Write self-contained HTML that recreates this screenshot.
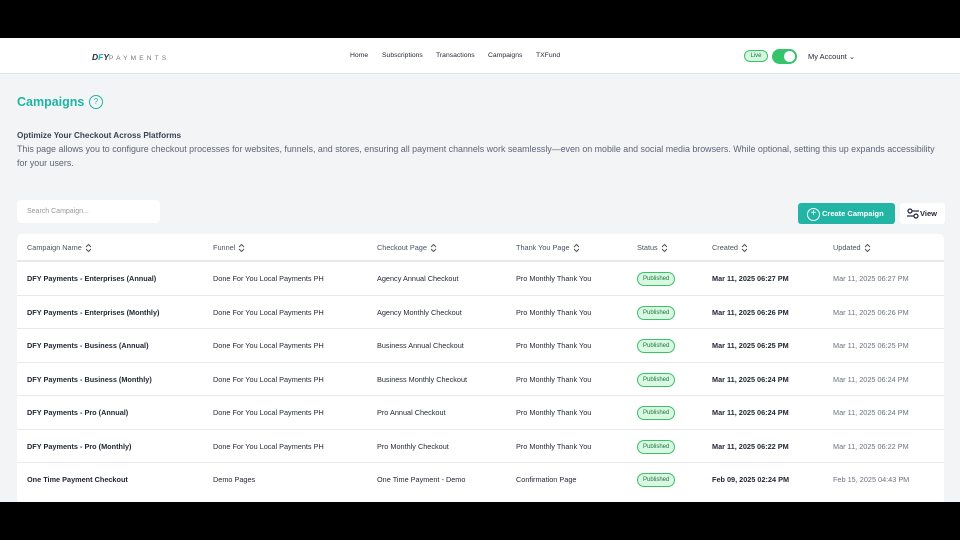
<!DOCTYPE html>
<html><head><style>
*{box-sizing:border-box;margin:0;padding:0}
body{width:960px;height:540px;background:#000;font-family:"Liberation Sans",sans-serif;position:relative;overflow:hidden}
.page{position:absolute;top:38px;left:0;width:960px;height:464px;background:#f3f4f6;overflow:hidden}
.hdr{height:36px;background:#fff;border-bottom:1px solid #e2e4e8;position:relative}
.logo{position:absolute;left:92px;top:14px;font-size:6.5px;letter-spacing:3.2px;color:#777}
.logo b{color:#1f2d3d;letter-spacing:0;font-size:8.5px;font-style:italic}
.logo b i{color:#1cb5a6}
.nav span{position:absolute;top:14px;font-size:6.8px;color:#1f2533}
.live{position:absolute;left:744px;top:12px;width:24px;height:12px;border:1px solid #3ac267;background:#d5f6df;border-radius:6px;font-size:6px;color:#1a7a3a;text-align:center;line-height:10px}
.tog{position:absolute;left:772px;top:11px;width:25px;height:15px;background:#35c46a;border-radius:8px}
.tog:after{content:"";position:absolute;right:2px;top:2px;width:11px;height:11px;background:#fff;border-radius:50%}
.acct{position:absolute;left:808px;top:14px;font-size:7.5px;color:#1f2533}
h1{position:absolute;left:17px;top:57px;font-size:12.5px;color:#1cb5a6}
.q{position:absolute;left:89px;top:57px;width:14px;height:14px;border:1.3px solid #1cb5a6;border-radius:50%;font-size:8px;color:#1cb5a6;text-align:center;line-height:12px}
.sub{position:absolute;left:17px;top:93px;font-size:8.2px;font-weight:bold;color:#3b4454}
.desc{position:absolute;left:17px;top:105px;width:940px;font-size:8.9px;line-height:13.5px;color:#5d6676;white-space:nowrap}
.search{position:absolute;left:17px;top:162px;width:143px;height:23px;background:#fff;border-radius:4px;font-size:7px;color:#999;padding:8px 10px}
.btn{position:absolute;left:798px;top:165px;width:97px;height:21px;background:#22b5a5;border-radius:3px;color:#fff;font-size:7.5px;font-weight:bold;line-height:21px;padding-left:24px}
.btn:before{content:"+";position:absolute;left:9px;top:5px;width:11px;height:11px;border:1.2px solid #fff;border-radius:50%;line-height:9px;text-align:center;font-size:10px;font-weight:normal}
.view{position:absolute;left:900px;top:165px;width:45px;height:21px;background:#fff;border-radius:3px;font-size:7.5px;font-weight:bold;color:#1f2533;line-height:21px;padding-left:20px}
.view svg{position:absolute;left:7px;top:5px}
.tbl{position:absolute;left:17px;top:196px;width:927px;height:270px;background:#fff;border-radius:5px;overflow:hidden}
.row{position:absolute;left:0;width:927px;height:33.5px;border-top:1px solid #e7e9ed;font-size:7.3px;color:#1f2533}
.row div{position:absolute;top:0;line-height:33px;white-space:nowrap}
.th{border-top:none;height:27px;color:#4a5363;border-bottom:1px solid #e7e9ed}
.th div{line-height:27px}
.th svg{vertical-align:middle;margin-left:3px}
.b{font-weight:bold}
.pub{display:inline-block;border:1px solid #3ac267;background:#d9f7e2;color:#177a36;border-radius:7px;font-size:6px;line-height:12px;padding:0 5px;vertical-align:middle}
.g{color:#6b7280}
</style></head><body>
<div class="page">
<div class="hdr">
<div class="logo"><b>D<i>F</i>Y</b>PAYMENTS</div>
<div class="nav"><span style="left:350px">Home</span><span style="left:382px">Subscriptions</span><span style="left:436px">Transactions</span><span style="left:488px">Campaigns</span><span style="left:536px">TXFund</span></div>
<div class="live">Live</div><div class="tog"></div>
<div class="acct">My Account &#8964;</div>
</div>
<h1>Campaigns</h1>
<div class="q">?</div>
<div class="sub">Optimize Your Checkout Across Platforms</div>
<div class="desc">This page allows you to configure checkout processes for websites, funnels, and stores, ensuring all payment channels work seamlessly—even on mobile and social media browsers. While optional, setting this up expands accessibility<br>for your users.</div>
<div class="search">Search Campaign...</div>
<div class="btn">Create Campaign</div>
<div class="view"><svg width="12" height="11" viewBox="0 0 12 11" fill="none" stroke="#1f2533" stroke-width="1.2"><circle cx="3" cy="3" r="2"/><line x1="5" y1="3" x2="12" y2="3"/><circle cx="9" cy="8" r="2"/><line x1="0" y1="8" x2="7" y2="8"/></svg>View</div>
<div class="tbl">
<div class="row th" style="top:0">
<div style="left:10px">Campaign Name<svg width="7" height="10" viewBox="0 0 7 10" fill="none" stroke="#555" stroke-width="1"><path d="M1 4L3.5 1.5L6 4M1 6L3.5 8.5L6 6"/></svg></div>
<div style="left:196px">Funnel<svg width="7" height="10" viewBox="0 0 7 10" fill="none" stroke="#555" stroke-width="1"><path d="M1 4L3.5 1.5L6 4M1 6L3.5 8.5L6 6"/></svg></div>
<div style="left:360px">Checkout Page<svg width="7" height="10" viewBox="0 0 7 10" fill="none" stroke="#555" stroke-width="1"><path d="M1 4L3.5 1.5L6 4M1 6L3.5 8.5L6 6"/></svg></div>
<div style="left:499px">Thank You Page<svg width="7" height="10" viewBox="0 0 7 10" fill="none" stroke="#555" stroke-width="1"><path d="M1 4L3.5 1.5L6 4M1 6L3.5 8.5L6 6"/></svg></div>
<div style="left:620px">Status<svg width="7" height="10" viewBox="0 0 7 10" fill="none" stroke="#555" stroke-width="1"><path d="M1 4L3.5 1.5L6 4M1 6L3.5 8.5L6 6"/></svg></div>
<div style="left:695px">Created<svg width="7" height="10" viewBox="0 0 7 10" fill="none" stroke="#555" stroke-width="1"><path d="M1 4L3.5 1.5L6 4M1 6L3.5 8.5L6 6"/></svg></div>
<div style="left:816px">Updated<svg width="7" height="10" viewBox="0 0 7 10" fill="none" stroke="#555" stroke-width="1"><path d="M1 4L3.5 1.5L6 4M1 6L3.5 8.5L6 6"/></svg></div>
</div>
<div class="row" style="top:27px"><div class="b" style="left:10px">DFY Payments - Enterprises (Annual)</div><div style="left:196px">Done For You Local Payments PH</div><div style="left:360px">Agency Annual Checkout</div><div style="left:499px">Pro Monthly Thank You</div><div style="left:620px"><span class="pub">Published</span></div><div class="b" style="left:695px">Mar 11, 2025 06:27 PM</div><div class="g" style="left:816px">Mar 11, 2025 06:27 PM</div></div>
<div class="row" style="top:60.5px"><div class="b" style="left:10px">DFY Payments - Enterprises (Monthly)</div><div style="left:196px">Done For You Local Payments PH</div><div style="left:360px">Agency Monthly Checkout</div><div style="left:499px">Pro Monthly Thank You</div><div style="left:620px"><span class="pub">Published</span></div><div class="b" style="left:695px">Mar 11, 2025 06:26 PM</div><div class="g" style="left:816px">Mar 11, 2025 06:26 PM</div></div>
<div class="row" style="top:94px"><div class="b" style="left:10px">DFY Payments - Business (Annual)</div><div style="left:196px">Done For You Local Payments PH</div><div style="left:360px">Business Annual Checkout</div><div style="left:499px">Pro Monthly Thank You</div><div style="left:620px"><span class="pub">Published</span></div><div class="b" style="left:695px">Mar 11, 2025 06:25 PM</div><div class="g" style="left:816px">Mar 11, 2025 06:25 PM</div></div>
<div class="row" style="top:127.5px"><div class="b" style="left:10px">DFY Payments - Business (Monthly)</div><div style="left:196px">Done For You Local Payments PH</div><div style="left:360px">Business Monthly Checkout</div><div style="left:499px">Pro Monthly Thank You</div><div style="left:620px"><span class="pub">Published</span></div><div class="b" style="left:695px">Mar 11, 2025 06:24 PM</div><div class="g" style="left:816px">Mar 11, 2025 06:24 PM</div></div>
<div class="row" style="top:161px"><div class="b" style="left:10px">DFY Payments - Pro (Annual)</div><div style="left:196px">Done For You Local Payments PH</div><div style="left:360px">Pro Annual Checkout</div><div style="left:499px">Pro Monthly Thank You</div><div style="left:620px"><span class="pub">Published</span></div><div class="b" style="left:695px">Mar 11, 2025 06:24 PM</div><div class="g" style="left:816px">Mar 11, 2025 06:24 PM</div></div>
<div class="row" style="top:194.5px"><div class="b" style="left:10px">DFY Payments - Pro (Monthly)</div><div style="left:196px">Done For You Local Payments PH</div><div style="left:360px">Pro Monthly Checkout</div><div style="left:499px">Pro Monthly Thank You</div><div style="left:620px"><span class="pub">Published</span></div><div class="b" style="left:695px">Mar 11, 2025 06:22 PM</div><div class="g" style="left:816px">Mar 11, 2025 06:22 PM</div></div>
<div class="row" style="top:228px"><div class="b" style="left:10px">One Time Payment Checkout</div><div style="left:196px">Demo Pages</div><div style="left:360px">One Time Payment - Demo</div><div style="left:499px">Confirmation Page</div><div style="left:620px"><span class="pub">Published</span></div><div class="b" style="left:695px">Feb 09, 2025 02:24 PM</div><div class="g" style="left:816px">Feb 15, 2025 04:43 PM</div></div>
</div>
</div>
</body></html>
